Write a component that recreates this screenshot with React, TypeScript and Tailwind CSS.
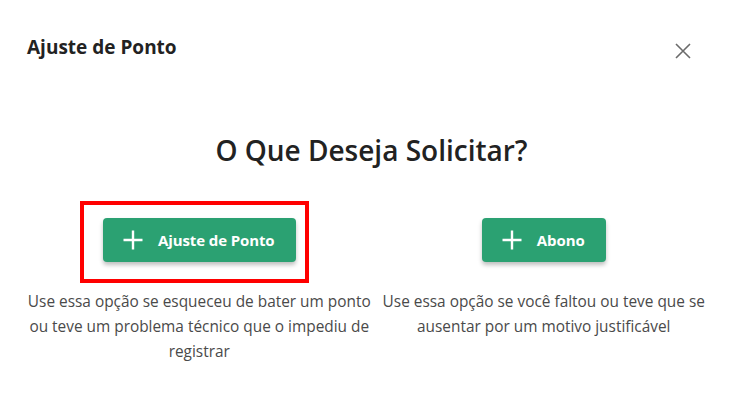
import React from "react";

function Plus() {
  return (
    <svg width="20" height="20" viewBox="0 0 20 20" fill="none" stroke="white" strokeWidth="2.4" strokeLinecap="butt">
      <path d="M10 0.5V19.5M0.5 10H19.5" />
    </svg>
  );
}

function Close() {
  return (
    <svg width="16" height="16" viewBox="0 0 16 16" fill="none" stroke="#6b6b6b" strokeWidth="1.6">
      <path d="M1 1L15 15M15 1L1 15" />
    </svg>
  );
}

export default function App() {
  return (
    <div className="w-[743px] h-[402px] bg-white px-[27px] font-['Open_Sans',sans-serif] overflow-hidden">
      <div className="flex items-start justify-between pt-[33px]">
        <h2 className="text-[19px] leading-[28px] font-bold text-[#222]">Ajuste de Ponto</h2>
        <button className="mt-[10px] mr-[25px] flex items-center justify-center">
          <Close />
        </button>
      </div>
      <h1 className="mt-[69px] text-center text-[28px] leading-[40px] font-semibold text-[#222]">
        O Que Deseja Solicitar?
      </h1>
      <div className="mt-[48px] grid grid-cols-2">
        <div className="flex flex-col items-center">
          <div className="relative">
            <button className="flex h-[44px] items-center gap-[15px] rounded-[4px] bg-[#2ba172] pl-[20px] pr-[21px] text-[15px] font-bold text-white shadow-[0_3px_4px_rgba(0,0,0,0.25)]">
              <Plus />
              <span className="tracking-[-0.1px]">Ajuste de Ponto</span>
            </button>
            <div className="pointer-events-none absolute left-[-23px] right-[-13px] top-[-17px] bottom-[-21px] border-[4px] border-[#ff0000]" />
          </div>
          <p className="mt-[27px] text-center text-[15.4px] leading-[25px] text-[#4a4a4a]">
            Use essa opção se esqueceu de bater um ponto ou teve um problema técnico que o impediu de registrar
          </p>
        </div>
        <div className="flex flex-col items-center">
          <button className="flex h-[44px] items-center gap-[15px] rounded-[4px] bg-[#2ba172] pl-[20px] pr-[21px] text-[15px] font-bold text-white shadow-[0_3px_4px_rgba(0,0,0,0.25)]">
            <Plus />
            <span className="tracking-[-0.1px]">Abono</span>
          </button>
          <p className="mt-[27px] text-center text-[15.4px] leading-[25px] text-[#4a4a4a]">
            Use essa opção se você faltou ou teve que se ausentar por um motivo justificável
          </p>
        </div>
      </div>
    </div>
  );
}
